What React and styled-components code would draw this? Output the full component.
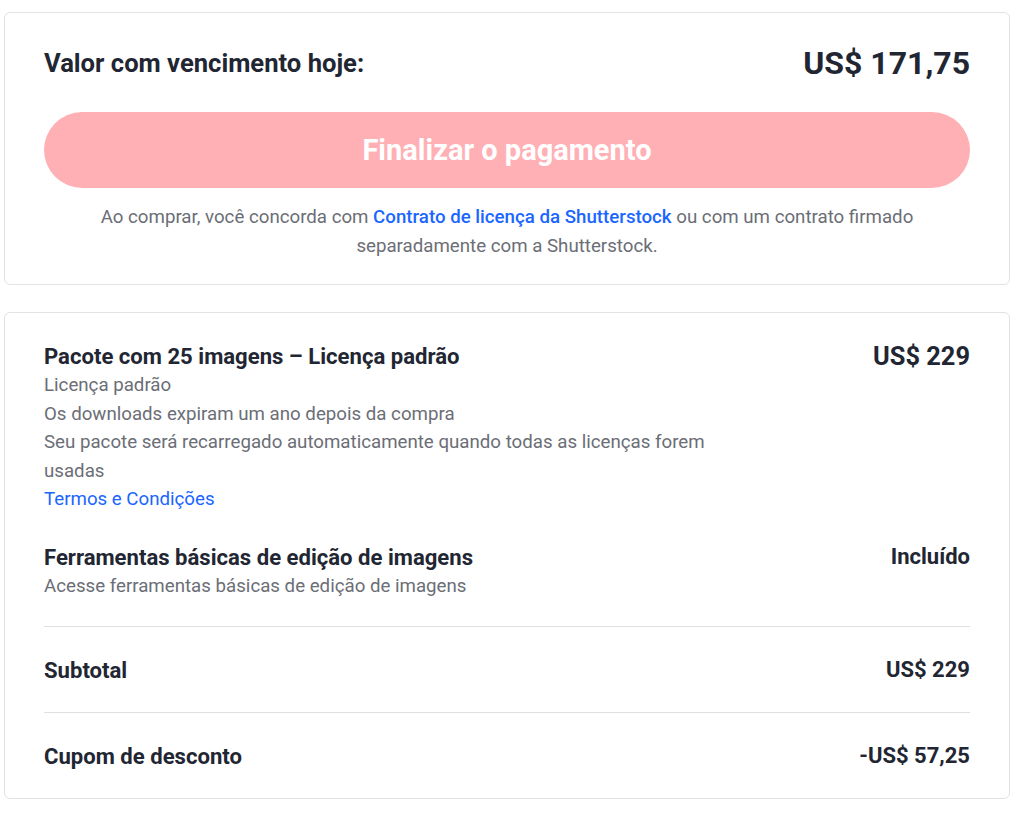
import React from "react";
import styled, { createGlobalStyle } from "styled-components";

const Global = createGlobalStyle`
  html, body { margin: 0; padding: 0; background: #fff; }
  body { font-family: Roboto, "Noto Sans", Arial, sans-serif; color: #222633; -webkit-font-smoothing: antialiased; }
  * { box-sizing: border-box; }
`;

const Page = styled.div`
  display: flex;
  flex-direction: column;
  gap: 27px;
  padding: 12px 14px 16px 4px;
`;

const Card = styled.section`
  border: 1px solid #e2e2e2;
  border-radius: 6px;
  background: #fff;
  padding: ${(p) => p.$pad};
`;

const HeaderRow = styled.div`
  display: flex;
  justify-content: space-between;
  align-items: center;
  height: 48px;
`;

const DueLabel = styled.h2`
  margin: 0;
  font-size: 25.6px;
  font-weight: 700;
  color: #222633;
`;

const DueAmount = styled.div`
  font-size: 32px;
  font-weight: 700;
  color: #222633;
`;

const PayButton = styled.button`
  display: block;
  width: 100%;
  height: 76px;
  margin-top: 25px;
  border: none;
  border-radius: 38px;
  background: #ffb0b5;
  color: #fff;
  font-family: inherit;
  font-size: 29px;
  font-weight: 700;
  cursor: not-allowed;
`;

const Legal = styled.p`
  margin: 15px 0 0;
  text-align: center;
  font-size: 18.7px;
  line-height: 29px;
  color: #6b6e76;
`;

const Link = styled.a`
  color: #1a66ff;
  font-weight: ${(p) => (p.$strong ? 500 : 400)};
  text-decoration: none;
`;

const LineItem = styled.div`
  display: flex;
  justify-content: space-between;
  align-items: flex-start;
  margin-bottom: ${(p) => p.$gap || "0"};
`;

const ItemInfo = styled.div`
  max-width: 680px;
  display: flex;
  flex-direction: column;
`;

const ItemTitle = styled.div`
  font-size: 22.1px;
  font-weight: 700;
  line-height: 30px;
  color: #222633;
`;

const ItemText = styled.div`
  font-size: 18.7px;
  line-height: 28.5px;
  color: #6b6e76;
`;

const ItemPrice = styled.div`
  font-size: ${(p) => p.$size || "22px"};
  font-weight: 700;
  line-height: 30px;
  color: #222633;
  white-space: nowrap;
`;

const Divider = styled.hr`
  margin: 0;
  border: none;
  border-top: 1px solid #e0e0e0;
`;

const SummaryRow = styled.div`
  display: flex;
  justify-content: space-between;
  align-items: center;
  height: 85px;
`;

export default function App() {
  return (
    <>
      <Global />
      <Page>
        <Card $pad="26px 39px 23px">
          <HeaderRow>
            <DueLabel>Valor com vencimento hoje:</DueLabel>
            <DueAmount>US$ 171,75</DueAmount>
          </HeaderRow>
          <PayButton disabled>Finalizar o pagamento</PayButton>
          <Legal>
            Ao comprar, você concorda com{" "}
            <Link $strong href="#">Contrato de licença da Shutterstock</Link> ou com um contrato firmado
            <br />
            separadamente com a Shutterstock.
          </Legal>
        </Card>
        <Card $pad="28px 39px 0">
          <LineItem $gap="28px">
            <ItemInfo>
              <ItemTitle>Pacote com 25 imagens – Licença padrão</ItemTitle>
              <ItemText>Licença padrão</ItemText>
              <ItemText>Os downloads expiram um ano depois da compra</ItemText>
              <ItemText>Seu pacote será recarregado automaticamente quando todas as licenças forem usadas</ItemText>
              <ItemText>
                <Link href="#">Termos e Condições</Link>
              </ItemText>
            </ItemInfo>
            <ItemPrice $size="25.4px">US$ 229</ItemPrice>
          </LineItem>
          <LineItem $gap="26px">
            <ItemInfo>
              <ItemTitle>Ferramentas básicas de edição de imagens</ItemTitle>
              <ItemText>Acesse ferramentas básicas de edição de imagens</ItemText>
            </ItemInfo>
            <ItemPrice>Incluído</ItemPrice>
          </LineItem>
          <Divider />
          <SummaryRow>
            <ItemTitle>Subtotal</ItemTitle>
            <ItemPrice>US$ 229</ItemPrice>
          </SummaryRow>
          <Divider />
          <SummaryRow>
            <ItemTitle>Cupom de desconto</ItemTitle>
            <ItemPrice>-US$ 57,25</ItemPrice>
          </SummaryRow>
        </Card>
      </Page>
    </>
  );
}
